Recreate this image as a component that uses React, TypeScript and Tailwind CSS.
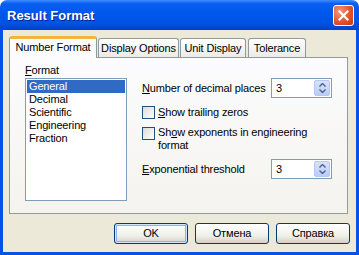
import React from "react";

function Spin({ value }: { value: string }) {
  return (
    <div className="w-[61px] h-[20px] border border-[#7f9db9] bg-white flex items-center">
      <span className="flex-1 pl-[4px]">{value}</span>
      <div className="w-[16px] h-[16px] mr-[1px] rounded-[2px] border border-[#b4c8f6] bg-[linear-gradient(to_bottom,#d7e2fc,#b9cdf8)] flex flex-col items-center justify-center gap-[2px]">
        <svg width="7" height="4" viewBox="0 0 7 4">
          <path d="M0.5 3.5 L3.5 0.5 L6.5 3.5" fill="none" stroke="#4d6185" strokeWidth="1.4" />
        </svg>
        <svg width="7" height="4" viewBox="0 0 7 4">
          <path d="M0.5 0.5 L3.5 3.5 L6.5 0.5" fill="none" stroke="#4d6185" strokeWidth="1.4" />
        </svg>
      </div>
    </div>
  );
}

function Check() {
  return (
    <div className="w-[13px] h-[13px] shrink-0 border border-[#1c5180] bg-[linear-gradient(135deg,#dcdcd7,#ffffff)]" />
  );
}

function Btn({ label, def }: { label: string; def?: boolean }) {
  return (
    <div
      className={
        "w-[74px] h-[21px] rounded-[3px] border border-[#003c74] bg-[linear-gradient(to_bottom,#ffffff,#f0f0ea_60%,#d6d0c5)] flex items-center justify-center " +
        (def ? "shadow-[inset_0_0_0_1px_#cee7ff,inset_0_0_0_2px_#8cb0f0]" : "")
      }
    >
      {label}
    </div>
  );
}

export default function App() {
  const items = ["General", "Decimal", "Scientific", "Engineering", "Fraction"];
  return (
    <div className="w-[359px] h-[255px] flex flex-col font-['Liberation_Sans',Arial,sans-serif] text-[11px] leading-[13px] tracking-[-0.15px] text-black">
      {/* title bar */}
      <div className="h-[30px] rounded-t-[7px] bg-[linear-gradient(to_bottom,#3c8dff_0%,#0a5ff2_12%,#0058ee_40%,#0054e3_75%,#0041d0_100%)] flex items-center justify-between">
        <span className="pl-[7px] text-white font-bold text-[13px] tracking-normal [text-shadow:1px_1px_0_#0a1e8c]">Result Format</span>
        <div className="mr-[5px] w-[21px] h-[21px] rounded-[3px] border border-white bg-[radial-gradient(circle_at_30%_30%,#f09a7c,#e0502a_60%,#c1381a)] flex items-center justify-center">
          <svg width="11" height="11" viewBox="0 0 11 11">
            <path d="M1.5 1.5 L9.5 9.5 M9.5 1.5 L1.5 9.5" stroke="white" strokeWidth="2.2" strokeLinecap="square" />
          </svg>
        </div>
      </div>

      {/* client */}
      <div className="flex-1 bg-[#ece9d8] border-x-[3px] border-b-[3px] border-[#0553e6] pt-[6px] pb-[8px] flex flex-col">
        <div className="flex items-end h-[21px] ml-[6px]">
          <div className="relative z-10 w-[88px] h-[22px] -mb-px border-x border-[#919b9c] border-t-[3px] border-t-[#f5b43a] rounded-t-[3px] bg-[#fcfcfe] flex items-center justify-center pb-[2px]">
            Number Format
          </div>
          <div className="ml-[1px] w-[81px] h-[19px] border border-b-0 border-[#919b9c] rounded-t-[3px] bg-[linear-gradient(to_bottom,#ffffff,#ecebe6)] flex items-center justify-center">
            Display Options
          </div>
          <div className="ml-[1px] w-[66px] h-[19px] border border-b-0 border-[#919b9c] rounded-t-[3px] bg-[linear-gradient(to_bottom,#ffffff,#ecebe6)] flex items-center justify-center">
            Unit Display
          </div>
          <div className="ml-[2px] w-[58px] h-[19px] border border-b-0 border-[#919b9c] rounded-t-[3px] bg-[linear-gradient(to_bottom,#ffffff,#ecebe6)] flex items-center justify-center">
            Tolerance
          </div>
        </div>

        <div className="ml-[6px] w-[339px] h-[157px] border border-[#919b9c] bg-[linear-gradient(to_bottom,#fcfcfe,#f4f3ee)] pt-[6px] pl-[15px] flex">
          <div className="flex flex-col">
            <div className="h-[13px]">
              <span className="underline">F</span>ormat
            </div>
            <div className="mt-[1px] w-[102px] h-[123px] border border-[#7f9db9] bg-white p-[1px] flex flex-col">
              {items.map((it, i) => (
                <div
                  key={it}
                  className={"h-[13px] pl-[2px] " + (i === 0 ? "bg-[#316ac5] text-white" : "")}
                >
                  {it}
                </div>
              ))}
            </div>
          </div>

          <div className="ml-[15px] mt-[14px] flex flex-col w-[190px]">
            <div className="h-[20px] flex items-center justify-between">
              <span>
                <span className="underline">N</span>umber of decimal places
              </span>
              <Spin value="3" />
            </div>
            <div className="mt-[8px] h-[13px] flex items-center gap-[3px]">
              <Check />
              <span>
                <span className="underline">S</span>how trailing zeros
              </span>
            </div>
            <div className="mt-[7px] flex items-start gap-[3px]">
              <div className="mt-[1px]">
                <Check />
              </div>
              <span>
                Sh<span className="underline">o</span>w exponents in engineering
                <br />
                format
              </span>
            </div>
            <div className="mt-[7px] h-[20px] flex items-center justify-between">
              <span>
                <span className="underline">E</span>xponential threshold
              </span>
              <Spin value="3" />
            </div>
          </div>
        </div>

        <div className="mt-[9px] pr-[6px] flex justify-end gap-[7px]">
          <Btn label="OK" def />
          <Btn label="Отмена" />
          <Btn label="Справка" />
        </div>
      </div>
    </div>
  );
}
